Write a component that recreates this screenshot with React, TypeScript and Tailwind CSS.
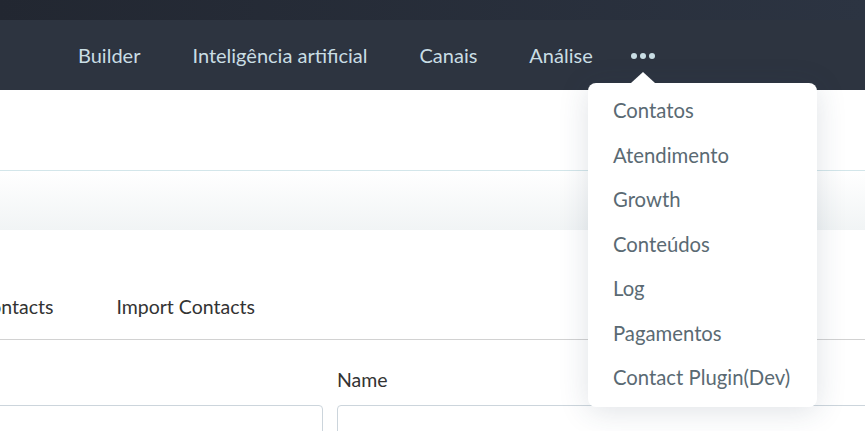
import React from "react";

export default function App() {
  const nav = ["Builder", "Inteligência artificial", "Canais", "Análise"];
  const menu = [
    "Contatos",
    "Atendimento",
    "Growth",
    "Conteúdos",
    "Log",
    "Pagamentos",
    "Contact Plugin(Dev)",
  ];
  return (
    <div
      className="relative w-[865px] h-[431px] overflow-hidden bg-white"
      style={{ fontFamily: "Lato, 'Noto Sans', sans-serif" }}
    >
      <div className="h-[20px] bg-gradient-to-r from-[#222731] to-[#2c3442]" />
      <div className="h-[70px] bg-[#2d3440] flex items-center pl-[52px]">
        {nav.map((n) => (
          <div key={n} className="px-[26px] text-[20px] text-[#c9dde4]">
            {n}
          </div>
        ))}
        <div className="flex gap-[3px] ml-[12px] mt-[2px]">
          <span className="w-[6px] h-[6px] rounded-full bg-[#c9dde4]" />
          <span className="w-[6px] h-[6px] rounded-full bg-[#c9dde4]" />
          <span className="w-[6px] h-[6px] rounded-full bg-[#c9dde4]" />
        </div>
      </div>
      <div className="h-[81px] border-b border-[#d3e6ea]" />
      <div className="h-[59px] bg-gradient-to-b from-white to-[#f1f4f5]" />
      <div className="h-[110px] flex items-end border-b border-[#d2d2d2]">
        <div className="flex text-[19.5px] text-[#333] pb-[18px]">
          <div className="ml-[-50px]">All Contacts</div>
          <div className="ml-[63px]">Import Contacts</div>
        </div>
      </div>
      <div className="flex gap-[14px] pt-[29px]">
        <div className="w-[323px] shrink-0 flex flex-col">
          <div className="h-[36px]" />
          <div className="h-[40px] border border-[#ccd5dc] rounded-[4px] ml-[-10px]" />
        </div>
        <div className="flex-1 flex flex-col">
          <div className="h-[36px] text-[19.5px] leading-[22px] text-[#333]">Name</div>
          <div className="h-[40px] border border-[#ccd5dc] rounded-[4px] mr-[-10px]" />
        </div>
      </div>

      <div className="absolute left-[588px] top-[83px] w-[229px] h-[324px] bg-white rounded-[8px] shadow-[0_4px_30px_rgba(40,60,90,0.15)] pt-[5px]">
        <div className="absolute left-[43px] -top-[11px] w-0 h-0 border-l-[12px] border-r-[12px] border-b-[11px] border-l-transparent border-r-transparent border-b-white" />
        {menu.map((m) => (
          <div key={m} className="h-[44.5px] flex items-center pl-[25px] text-[20.3px] text-[#5a6a73]">
            {m}
          </div>
        ))}
      </div>
    </div>
  );
}
